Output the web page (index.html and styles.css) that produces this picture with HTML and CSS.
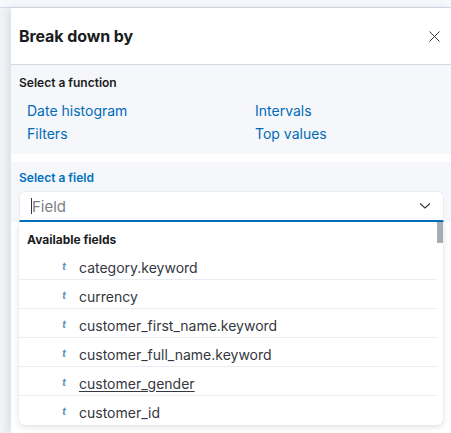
FILE: index.html
```html
<!DOCTYPE html>
<html>
<head>
<meta charset="utf-8">
<link rel="stylesheet" href="styles.css">
</head>
<body>
<div class="topbar"></div>
<div class="flyout">
  <div class="header">
    <h2 class="title">Break down by</h2>
    <svg class="close" width="11" height="11" viewBox="0 0 11 11"><path d="M0.5 0.5L10.5 10.5M10.5 0.5L0.5 10.5" stroke="#343741" stroke-width="1" fill="none"/></svg>
  </div>
  <div class="functions">
    <div class="label">Select a function</div>
    <div class="fn-grid">
      <a class="fn">Date histogram</a>
      <a class="fn">Intervals</a>
      <a class="fn">Filters</a>
      <a class="fn">Top values</a>
    </div>
  </div>
  <div class="field-section">
    <div class="label blue">Select a field</div>
    <div class="combo">
      <span class="cursor"></span><span class="placeholder">Field</span>
      <svg class="chev" width="12" height="8" viewBox="0 0 12 8"><path d="M1 1.5L6 6L11 1.5" stroke="#343741" stroke-width="1.1" fill="none"/></svg>
    </div>
  </div>
  <div class="listwrap">
    <div class="list">
      <div class="group">Available fields</div>
      <div class="row"><span class="tok">t</span><span class="name">category.keyword</span></div>
      <div class="row"><span class="tok">t</span><span class="name">currency</span></div>
      <div class="row"><span class="tok">t</span><span class="name">customer_first_name.keyword</span></div>
      <div class="row"><span class="tok">t</span><span class="name">customer_full_name.keyword</span></div>
      <div class="row"><span class="tok">t</span><span class="name under">customer_gender</span></div>
      <div class="row last"><span class="tok">t</span><span class="name">customer_id</span></div>
      <div class="thumb"></div>
    </div>
  </div>
</div>
</body>
</html>
```
FILE: styles.css
```css
html, body {
  margin: 0;
  padding: 0;
  height: 433px;
  overflow: hidden;
}
body {
  background: #f1f3f6;
  font-family: Inter, "Noto Sans", sans-serif;
  color: #343741;
}
.topbar {
  height: 7px;
  background: #f7f8fb;
  border-bottom: 1px solid #d3dae6;
}
.flyout {
  margin-left: 11px;
  background: #fff;
  height: 425px;
  box-shadow: -3px 0 8px rgba(60, 70, 90, 0.12);
  position: relative;
}
.header {
  height: 56px;
  border-bottom: 1px solid #d3dae6;
  display: flex;
  align-items: center;
  justify-content: space-between;
  padding: 0 11px 0 8px;
}
.title {
  margin: 0;
  font-size: 16px;
  font-weight: 700;
  color: #1a1c21;
  letter-spacing: -0.1px;
}
.close {
  display: block;
  margin-top: 1px;
}
.functions {
  background: #f5f7fa;
  padding: 10px 8px 9px 8px;
  height: 70px;
}
.label {
  font-size: 12px;
  font-weight: 600;
  line-height: 16px;
  color: #1a1c21;
}
.label.blue {
  color: #0071c2;
}
.fn-grid {
  display: grid;
  grid-template-columns: 228px 1fr;
  padding-left: 8px;
  margin-top: 10px;
  row-gap: 3px;
}
.fn {
  font-size: 14px;
  line-height: 20px;
  color: #006bb8;
}
.field-section {
  margin-top: 8px;
  background: #f5f7fa;
  padding: 8px 8px 0 8px;
  height: 52px;
}
.combo {
  margin-top: 5px;
  height: 28px;
  background: #fff;
  border: 1px solid #e9edf3;
  border-bottom: 2px solid #0071c2;
  border-radius: 6px 6px 0 0;
  display: flex;
  align-items: center;
  padding: 0 12px 0 11px;
  margin-right: -1px;
}
.cursor {
  width: 1px;
  height: 16px;
  background: #343741;
}
.placeholder {
  font-size: 15px;
  color: #7a7f89;
  flex: 1;
}
.chev {
  display: block;
}
.listwrap {
  padding-left: 8px;
  width: 424px;
}
.list {
  position: relative;
  background: #fff;
  border-radius: 0 0 6px 6px;
  box-shadow: 0 2px 6px rgba(0, 0, 0, 0.12), 0 0 2px rgba(0, 0, 0, 0.06);
  padding-right: 6px;
  height: 203px;
  overflow: hidden;
}
.group {
  font-size: 12px;
  font-weight: 700;
  color: #1a1c21;
  line-height: 20px;
  padding: 8px 0 1px 8px;
}
.row {
  display: flex;
  align-items: center;
  height: 23px;
  padding-top: 5px;
  border-bottom: 1px solid #e9edf3;
}
.row.last {
  border-bottom: none;
}
.row .tok {
  width: 60px;
  text-align: right;
  padding-right: 13px;
  box-sizing: border-box;
  font-family: Inter, "Noto Sans", sans-serif;
  font-style: italic;
  font-weight: 700;
  font-size: 10px;
  color: #6092c0;
  margin-top: -4px;
}
.row .name {
  font-size: 14px;
  line-height: 20px;
  color: #343741;
}
.row .name.under {
  text-decoration: underline;
  text-underline-offset: 2px;
}
.thumb {
  position: absolute;
  right: 0;
  top: 0;
  width: 6px;
  height: 21px;
  background: #a7abb3;
}
```
